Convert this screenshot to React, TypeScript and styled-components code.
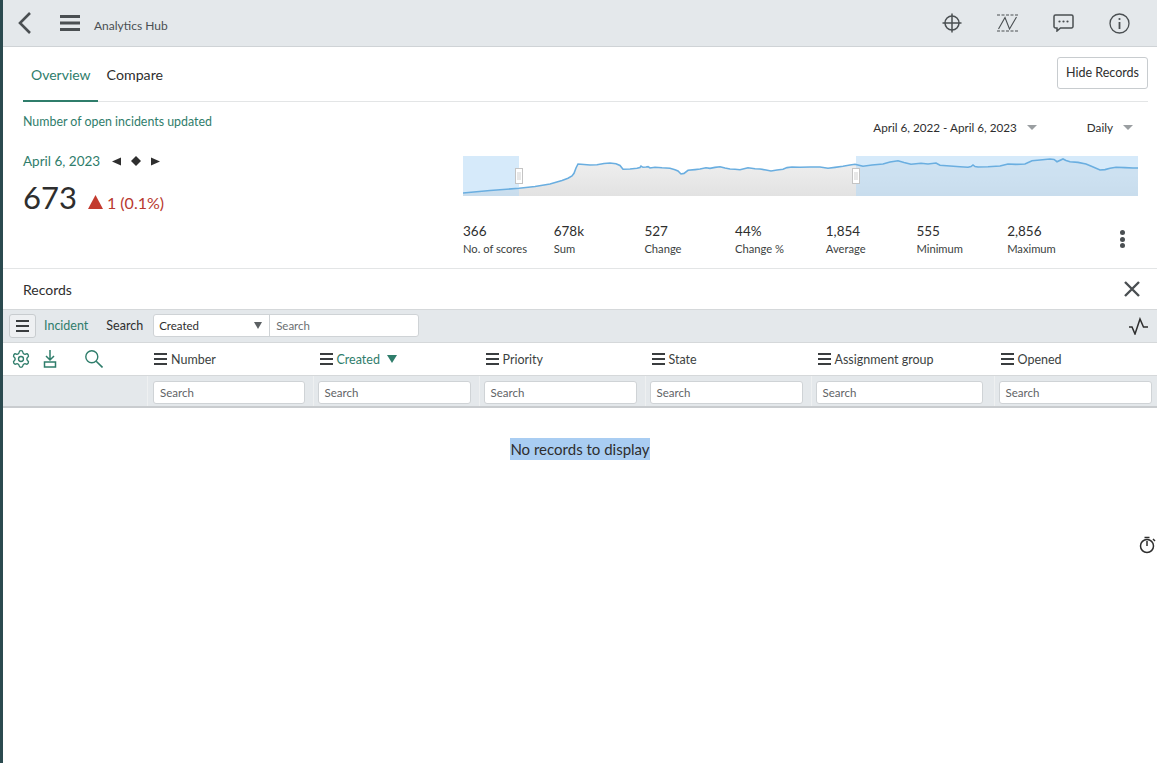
import styled, { createGlobalStyle } from "styled-components"
import { Settings } from "lucide-react"

const GlobalStyle = createGlobalStyle`
  html, body { margin: 0; padding: 0; background: #fff; }
  body { font-family: "Lato", "Noto Sans", sans-serif; color: #2e2e2e; overflow: hidden; }
`

const GREEN = "#2f7d6b"
const GREY_BAR = "#e4e8eb"
const ICON = "#4a4f52"

const Page = styled.div`
  position: relative;
  width: 1157px;
  height: 763px;
  box-sizing: border-box;
  border-left: 3px solid #2b4a4f;
  overflow: hidden;
`

const TopBar = styled.header`
  height: 46px;
  background: ${GREY_BAR};
  border-bottom: 1px solid #cfd3d6;
  display: flex;
  align-items: center;
  padding: 0 27px 0 14px;
`

const MenuIcon = styled.svg`
  margin-left: 27px;
`

const AppTitle = styled.span`
  font-size: 12px;
  color: #4a4f52;
  margin: 4px 0 0 14px;
`

const TopIcons = styled.div`
  margin-left: auto;
  display: flex;
  align-items: center;
  gap: 35px;
`

const Tabs = styled.nav`
  height: 54px;
  margin: 0 9px 0 20px;
  border-bottom: 1px solid #e3e5e6;
  display: flex;
  align-items: stretch;
`

const Tab = styled.div<{ $active?: boolean }>`
  display: flex;
  align-items: center;
  padding: 2px 8px 0;
  font-size: 14px;
  margin-bottom: -1px;
  color: ${(p) => (p.$active ? GREEN : "#2e2e2e")};
  border-bottom: 2px solid ${(p) => (p.$active ? GREEN : "transparent")};
  &:first-child {
    padding-right: 7px;
  }
  &:nth-child(2) {
    padding-left: 9px;
    font-size: 14.2px;
  }
`

const HideButton = styled.button`
  margin: 10px 0 12px auto;
  width: 91px;
  background: #fff;
  border: 1px solid #c8cccf;
  border-radius: 3px;
  font: inherit;
  font-size: 12.5px;
  color: #2e2e2e;
  padding: 0 0 2px;
`

const Summary = styled.section`
  height: 166px;
  padding: 0 19px 0 20px;
  display: grid;
  grid-template-columns: 440px 1fr;
  border-bottom: 1px solid #e3e5e6;
`

const LeftCol = styled.div`
  padding-top: 12px;
`

const IndicatorLink = styled.div`
  font-size: 12.4px;
  line-height: 16px;
  color: ${GREEN};
`

const DateRow = styled.div`
  display: flex;
  align-items: center;
  gap: 12px;
  margin-top: 22px;
  font-size: 13.5px;
  line-height: 18px;
  color: ${GREEN};
`

const Stepper = styled.span`
  display: flex;
  align-items: center;
  gap: 10px;
`

const ScoreRow = styled.div`
  display: flex;
  align-items: baseline;
  gap: 11px;
  margin-top: 7px;
`

const Score = styled.span`
  font-size: 31px;
  line-height: 40px;
  color: #2e2e2e;
`

const Delta = styled.span`
  display: flex;
  align-items: baseline;
  gap: 4px;
  font-size: 16px;
  color: #b8392f;
`

const RightCol = styled.div`
  display: flex;
  flex-direction: column;
`

const Filters = styled.div`
  height: 54px;
  display: flex;
  justify-content: flex-end;
  align-items: center;
  padding: 0 5px 4px 0;
  box-sizing: border-box;
  font-size: 11.7px;
`

const FilterItem = styled.span<{ $gap: number }>`
  display: flex;
  align-items: center;
  gap: 10px;
  margin-left: ${(p) => p.$gap}px;
`

const Caret = styled.span`
  width: 0;
  height: 0;
  border-left: 5px solid transparent;
  border-right: 5px solid transparent;
  border-top: 5px solid #9a9ea1;
`

const Chart = styled.svg`
  display: block;
  width: 675px;
  height: 40px;
`

const Stats = styled.div`
  display: flex;
  margin-top: 26px;
`

const Stat = styled.div`
  width: 90.7px;
  flex: none;
`

const StatValue = styled.div`
  font-size: 13.5px;
  line-height: 18px;
`

const StatLabel = styled.div`
  font-size: 11.2px;
  line-height: 18px;
  color: #3c3f41;
`

const Kebab = styled.div`
  display: flex;
  flex-direction: column;
  gap: 1.5px;
  margin: 8px 0 0 22.5px;
  i {
    width: 5px;
    height: 5px;
    border-radius: 50%;
    background: #4a4f52;
  }
`

const RecordsHead = styled.div`
  height: 40px;
  padding: 0 17px 0 20px;
  display: flex;
  align-items: center;
  justify-content: space-between;
  font-size: 14px;
`

const ListBar = styled.div`
  height: 31px;
  padding: 0 8px 1px 6px;
  background: ${GREY_BAR};
  border-top: 1px solid #d5d8da;
  border-bottom: 1px solid #d5d8da;
  display: flex;
  align-items: center;
  font-size: 12.5px;
`

const MenuButton = styled.button`
  width: 27px;
  height: 24px;
  padding: 0;
  display: flex;
  align-items: center;
  justify-content: center;
  background: #eef0f2;
  border: 1px solid #c8cccf;
  border-radius: 3px;
`

const ListName = styled.span`
  color: ${GREEN};
  margin-left: 8px;
`

const SearchLabel = styled.span`
  margin-left: 18px;
  margin-right: 10px;
`

const SearchGroup = styled.div`
  display: flex;
  width: 266px;
  height: 23px;
  background: #fff;
  border: 1px solid #cfd3d6;
  border-radius: 3px;
  box-sizing: border-box;
  font-size: 11.5px;
`

const FieldSelect = styled.div`
  width: 116px;
  box-sizing: border-box;
  display: flex;
  align-items: center;
  justify-content: space-between;
  padding: 0 7px 0 5px;
  border-right: 1px solid #cfd3d6;
  color: #2e2e2e;
  i {
    width: 0;
    height: 0;
    border-left: 4px solid transparent;
    border-right: 4px solid transparent;
    border-top: 7px solid #5c6063;
  }
`

const FieldSearch = styled.div`
  display: flex;
  align-items: center;
  padding-left: 6px;
  color: #6b6f72;
`

const PulseSlot = styled.span`
  margin-left: auto;
  display: flex;
`

const ColumnGrid = styled.div<{ $filter?: boolean }>`
  display: grid;
  grid-template-columns: 144px 165.5px 166px 166px 166px 183px 1fr;
  height: ${(p) => (p.$filter ? 30 : 32)}px;
  background: ${(p) => (p.$filter ? GREY_BAR : "#fff")};
  border-bottom: ${(p) => (p.$filter ? "2px solid #c9cccf" : "1px solid #d5d8da")};
`

const ToolCell = styled.div`
  display: flex;
  align-items: center;
  padding-left: 8px;
  color: ${GREEN};
`

const ToolIcon = styled.span<{ $left: number }>`
  display: flex;
  margin-left: ${(p) => p.$left}px;
`

const HeadCell = styled.div<{ $sorted?: boolean }>`
  display: flex;
  align-items: center;
  gap: 4px;
  padding-left: 7px;
  font-size: 12.5px;
  color: ${(p) => (p.$sorted ? GREEN : "#3c3f41")};
`

const SortMark = styled.span`
  width: 0;
  height: 0;
  margin-left: 3px;
  border-left: 5px solid transparent;
  border-right: 5px solid transparent;
  border-top: 8px solid ${GREEN};
`

const FilterCell = styled.div`
  display: flex;
  align-items: center;
  padding: 2px 7.5px 0 4px;
  border-left: 1px solid #eef0f1;
  &:nth-child(2) {
    padding-left: 5px;
  }
  &:nth-child(6) {
    padding-right: 10.5px;
  }
  &:last-child {
    padding-right: 5px;
  }
`

const FilterBox = styled.div`
  flex: 1;
  height: 23px;
  box-sizing: border-box;
  display: flex;
  align-items: center;
  padding-left: 6px;
  background: #fff;
  border: 1px solid #cfd3d6;
  border-radius: 3px;
  font-size: 11.5px;
  color: #5f6366;
`

const EmptyRow = styled.div`
  padding-top: 30px;
  display: flex;
  justify-content: center;
  font-size: 15px;
  line-height: 20px;
`

const Selected = styled.span`
  background: #a9cdf2;
  color: #2e2e2e;
  padding: 1px 0;
`

const FloatingTimer = styled.div`
  position: absolute;
  right: 0;
  top: 536px;
  width: 18px;
  height: 18px;
`

const Hamburger = ({ color = "#3a3d3f" }: { color?: string }) => (
  <svg width="13" height="12" viewBox="0 0 13 12" fill={color}>
    <rect width="13" height="2" />
    <rect width="13" height="2" y="5" />
    <rect width="13" height="2" y="10" />
  </svg>
)

const line = "463,193 490,190.5 519,188.3 535,186.5 550,184 562,180.5 568,178.3 572,176 574,173.3 576,168 578,164 581,164.3 590,165 597,164.7 604,163.5 610,163 616,163.7 620,165.5 623,169.3 630,169 637,168.3 640,167.5 641,166 643,167.3 646,167 648,166.6 650,168 655,167.2 662,167.8 670,168.3 675,169.8 678,171 681,174 684,173.4 688,170.3 695,169.6 700,169 706,167.7 710,168.4 715,167.4 720,166.7 725,168 730,169 735,169.2 740,169.7 748,167.7 755,168.8 760,169 766,170 771,171 777,170 783,169.3 787,167.6 792,167 800,167.2 810,167 820,167 828,168.3 835,167.4 843,166.3 850,165 855,164.3 859,165.2 863,166.3 872,165 883,164 890,162 898,160.7 904,162.6 911,164.3 916,163.8 921,163.3 928,164 936,163 940,165.3 950,166 960,166.8 968,167.3 971,166.6 973,165 975,166.6 978,167 988,166.8 1000,166 1008,164 1016,164.4 1025,164 1032,160.7 1040,160 1050,159 1054,159.4 1057,161.7 1063,159 1066,160.4 1070,161.7 1078,162.4 1086,164 1092,166.5 1100,170 1105,169.6 1110,168.3 1116,167.3 1125,167.6 1133,168 1138,168"

const columns = ["Number", "Created", "Priority", "State", "Assignment group", "Opened"]
const stats = [
  ["366", "No. of scores"],
  ["678k", "Sum"],
  ["527", "Change"],
  ["44%", "Change %"],
  ["1,854", "Average"],
  ["555", "Minimum"],
  ["2,856", "Maximum"],
]

const App = () => (
  <Page>
    <GlobalStyle />
    <TopBar>
      <svg width="16" height="24" viewBox="0 0 16 24" fill="none" stroke={ICON} strokeWidth="2.6">
        <path d="M13 2 3 12l10 10" />
      </svg>
      <MenuIcon width="20" height="16" viewBox="0 0 20 16" fill={ICON}>
        <rect width="20" height="3" />
        <rect width="20" height="3" y="6.5" />
        <rect width="20" height="3" y="13" />
      </MenuIcon>
      <AppTitle>Analytics Hub</AppTitle>
      <TopIcons>
        <svg width="20" height="20" viewBox="0 0 20 20" fill="none" stroke={ICON} strokeWidth="1.5">
          <circle cx="10" cy="10" r="7" />
          <path d="M0.5 10h19M10 .5v19" />
        </svg>
        <svg width="21" height="18" viewBox="0 0 21 18" fill="none" stroke={ICON} strokeWidth="1.1">
          <path d="M0 1h21M0 17h21" strokeDasharray="3 1.5" />
          <path d="M1.5 15 8 3.5l4.5 11.5 7-12" />
        </svg>
        <svg width="21" height="18" viewBox="0 0 21 18" fill="none" stroke={ICON} strokeWidth="1.5">
          <path d="M2.5 1h16a1.5 1.5 0 0 1 1.5 1.5v10a1.5 1.5 0 0 1-1.5 1.5H7.5l-3.5 3v-3H2.5A1.5 1.5 0 0 1 1 12.5v-10A1.5 1.5 0 0 1 2.5 1z" />
          <circle cx="6.5" cy="7.5" r="1.1" fill={ICON} stroke="none" />
          <circle cx="10.5" cy="7.5" r="1.1" fill={ICON} stroke="none" />
          <circle cx="14.5" cy="7.5" r="1.1" fill={ICON} stroke="none" />
        </svg>
        <svg width="21" height="21" viewBox="0 0 21 21" fill="none" stroke={ICON} strokeWidth="1.3">
          <circle cx="10.5" cy="10.5" r="9.5" />
          <circle cx="10.5" cy="6" r="1.1" fill={ICON} stroke="none" />
          <path d="M10.5 9v7" strokeWidth="1.8" />
        </svg>
      </TopIcons>
    </TopBar>

    <Tabs>
      <Tab $active>Overview</Tab>
      <Tab>Compare</Tab>
      <HideButton>Hide Records</HideButton>
    </Tabs>

    <Summary>
      <LeftCol>
        <IndicatorLink>Number of open incidents updated</IndicatorLink>
        <DateRow>
          April 6, 2023
          <Stepper>
            <svg width="9" height="9" viewBox="0 0 9 9" fill="#2e2e2e"><path d="M9 .5v8L0 4.5z" /></svg>
            <svg width="10" height="10" viewBox="0 0 10 10" fill="#2e2e2e"><path d="M5 0l5 5-5 5-5-5z" /></svg>
            <svg width="9" height="9" viewBox="0 0 9 9" fill="#2e2e2e"><path d="M0 .5v8l9-4z" /></svg>
          </Stepper>
        </DateRow>
        <ScoreRow>
          <Score>673</Score>
          <Delta>
            <svg width="15" height="14" viewBox="0 0 15 14" fill="#c33a2e"><path d="M7.5 0 15 14H0z" /></svg>
            1 (0.1%)
          </Delta>
        </ScoreRow>
      </LeftCol>
      <RightCol>
        <Filters>
          <FilterItem $gap={0}>April 6, 2022 - April 6, 2023<Caret /></FilterItem>
          <FilterItem $gap={50}>Daily<Caret /></FilterItem>
        </Filters>
        <Chart viewBox="463 156 675 40">
          <defs>
            <linearGradient id="area" x1="0" y1="0" x2="0" y2="1">
              <stop offset="0" stopColor="#f0f0f0" />
              <stop offset="1" stopColor="#e2e2e2" />
            </linearGradient>
          </defs>
          <polygon points={`463,196 ${line} 1138,196`} fill="url(#area)" />
          <rect x="463" y="156" width="56" height="40" fill="#b5d8f5" opacity="0.55" />
          <rect x="856" y="156" width="282" height="40" fill="#b5d8f5" opacity="0.55" />
          <polyline points={line} fill="none" stroke="#6aaee0" strokeWidth="1.6" />
          <rect x="515.5" y="168.5" width="7" height="15" fill="#fff" stroke="#c4c4c4" />
          <path d="M518 172v8M520 172v8" stroke="#bbb" strokeWidth="0.7" />
          <rect x="852.5" y="168.5" width="7" height="15" fill="#fff" stroke="#c4c4c4" />
          <path d="M855 172v8M857 172v8" stroke="#bbb" strokeWidth="0.7" />
        </Chart>
        <Stats>
          {stats.map(([value, label]) => (
            <Stat key={label}>
              <StatValue>{value}</StatValue>
              <StatLabel>{label}</StatLabel>
            </Stat>
          ))}
          <Kebab><i /><i /><i /></Kebab>
        </Stats>
      </RightCol>
    </Summary>

    <RecordsHead>
      Records
      <svg width="16" height="16" viewBox="0 0 16 16" stroke={ICON} strokeWidth="2.4">
        <path d="M1 1l14 14M15 1 1 15" />
      </svg>
    </RecordsHead>

    <ListBar>
      <MenuButton><Hamburger /></MenuButton>
      <ListName>Incident</ListName>
      <SearchLabel>Search</SearchLabel>
      <SearchGroup>
        <FieldSelect>Created<i /></FieldSelect>
        <FieldSearch>Search</FieldSearch>
      </SearchGroup>
      <PulseSlot>
        <svg width="20" height="18" viewBox="0 0 20 18" fill="none" stroke="#2e2e2e" strokeWidth="1.5">
          <path d="M0 10h3l3 7 5-15 3.5 8H19" />
        </svg>
      </PulseSlot>
    </ListBar>

    <ColumnGrid>
      <ToolCell>
        <Settings size={20} strokeWidth={1.6} />
        <ToolIcon $left={12}>
          <svg width="14" height="18" viewBox="0 0 14 18" fill="none" stroke={GREEN} strokeWidth="1.5">
            <path d="M7 0v9M3 6l4 4 4-4" />
            <rect x="1.5" y="12" width="11" height="5" />
          </svg>
        </ToolIcon>
        <ToolIcon $left={28}>
          <svg width="18" height="18" viewBox="0 0 18 18" fill="none" stroke={GREEN} strokeWidth="1.4">
            <circle cx="6.8" cy="6.8" r="6" />
            <path d="M11.2 11.2 17.5 17.5" strokeWidth="1.6" />
          </svg>
        </ToolIcon>
      </ToolCell>
      {columns.map((name) => (
        <HeadCell key={name} $sorted={name === "Created"}>
          <Hamburger />
          {name}
          {name === "Created" && <SortMark />}
        </HeadCell>
      ))}
    </ColumnGrid>

    <ColumnGrid $filter>
      <div />
      {columns.map((name) => (
        <FilterCell key={name}><FilterBox>Search</FilterBox></FilterCell>
      ))}
    </ColumnGrid>

    <EmptyRow><Selected>No records to display</Selected></EmptyRow>

    <FloatingTimer>
      <svg width="18" height="18" viewBox="0 0 18 18" fill="none" stroke="#2e2e2e" strokeWidth="1.5">
        <circle cx="8" cy="10" r="6.5" />
        <path d="M8 10V5M5.5 1.5h5M14 3l2 2" />
      </svg>
    </FloatingTimer>
  </Page>
)

export default App
